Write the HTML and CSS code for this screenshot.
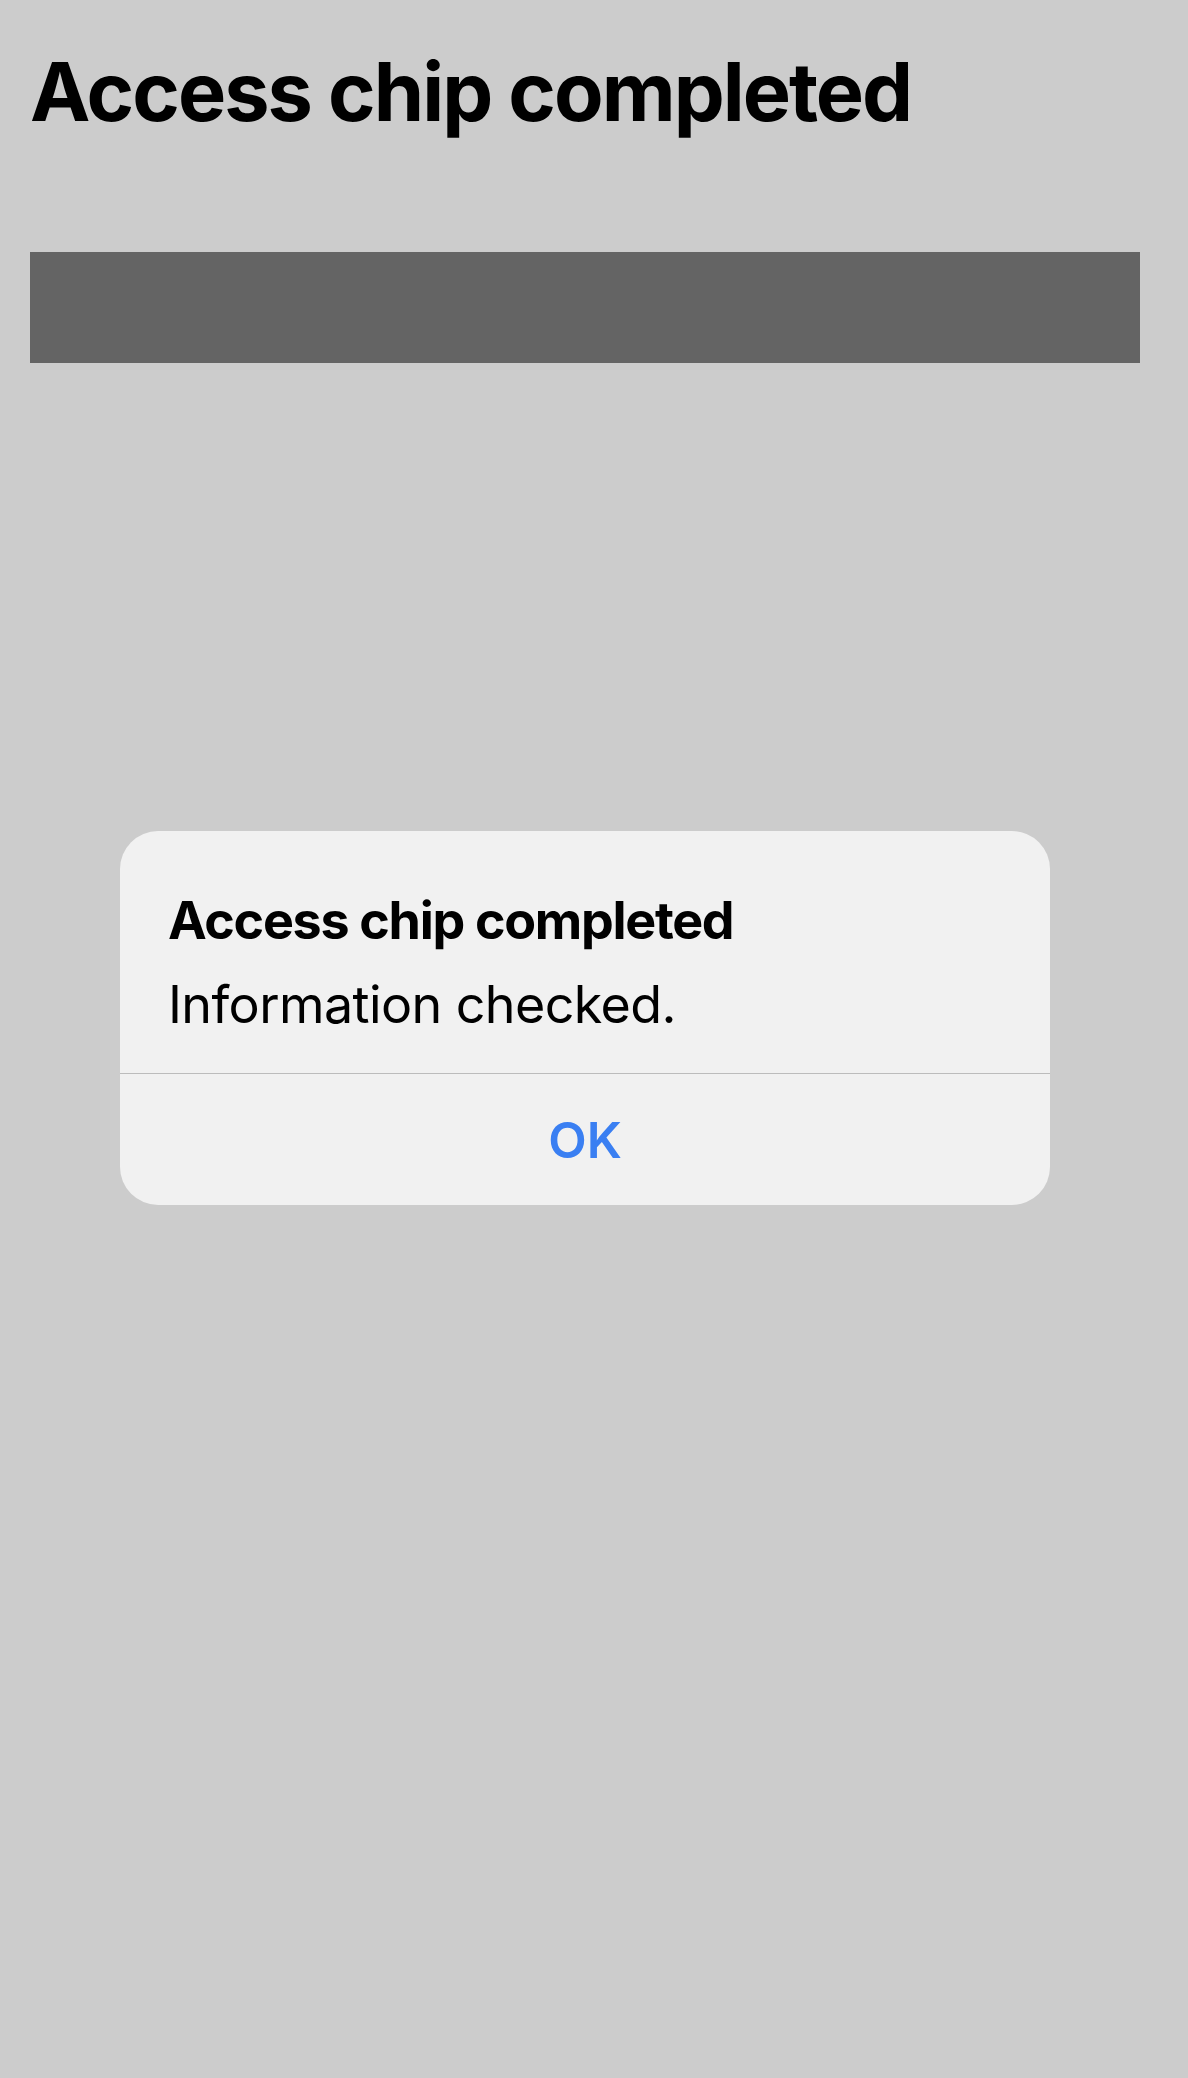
FILE: index.html
```html
<!DOCTYPE html>
<html lang="en">
<head>
<meta charset="utf-8">
<title>Access chip completed</title>
<link rel="stylesheet" href="styles.css">
</head>
<body>
<main class="page">
  <h1 class="heading">Access chip completed</h1>
  <div class="bar"></div>
</main>
<div class="overlay">
  <div class="alert" role="alertdialog">
    <div class="alert-body">
      <h2 class="alert-title">Access chip completed</h2>
      <p class="alert-message">Information checked.</p>
    </div>
    <button class="alert-button" type="button">OK</button>
  </div>
</div>
</body>
</html>
```
FILE: styles.css
```css
html, body {
  margin: 0;
  padding: 0;
}
body {
  background: #cccccc;
  width: 1188px;
  height: 2078px;
  font-family: Inter, "Noto Sans", sans-serif;
  color: #000;
  overflow: hidden;
}
.page {
  padding: 0 48px 0 30px;
  display: flex;
  flex-direction: column;
}
.heading {
  margin: 42px 0 0;
  font-size: 81px;
  line-height: 100px;
  font-weight: 700;
  letter-spacing: -2px;
}
.bar {
  margin-top: 110px;
  height: 111px;
  background: #646464;
}
.overlay {
  position: absolute;
  left: 0;
  top: 0;
  width: 1188px;
  height: 2078px;
}
.alert {
  position: absolute;
  left: 120px;
  top: 831px;
  width: 930px;
  height: 374px;
  background: #f1f1f1;
  border-radius: 38px;
  display: flex;
  flex-direction: column;
  overflow: hidden;
}
.alert-body {
  padding: 58px 48px 0 48px;
  height: 184px;
  border-bottom: 1px solid #bcbcbc;
}
.alert-title {
  margin: 0;
  font-size: 52px;
  line-height: 64px;
  font-weight: 700;
  letter-spacing: -1.3px;
}
.alert-message {
  margin: 20px 0 0;
  font-size: 52px;
  line-height: 64px;
  font-weight: 400;
  letter-spacing: -0.6px;
}
.alert-button {
  flex: 1;
  border: 0;
  background: transparent;
  font-family: Inter, "Noto Sans", sans-serif;
  font-size: 50px;
  font-weight: 600;
  color: #3a7ff2;
  padding: 0;
}
```
